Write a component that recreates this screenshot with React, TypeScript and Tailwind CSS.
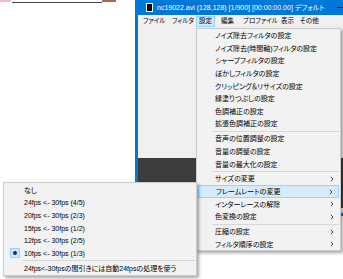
import React from 'react';

type Entry = { label: string; sub?: boolean; active?: boolean } | 'sep';

const mainItems: Entry[] = [
  { label: 'ノイズ除去フィルタの設定' },
  { label: 'ノイズ除去(時間軸)フィルタの設定' },
  { label: 'シャープフィルタの設定' },
  { label: 'ぼかしフィルタの設定' },
  { label: 'クリッピング＆リサイズの設定' },
  { label: '縁塗りつぶしの設定' },
  { label: '色調補正の設定' },
  { label: '拡張色調補正の設定' },
  'sep',
  { label: '音声の位置調整の設定' },
  { label: '音量の調整の設定' },
  { label: '音量の最大化の設定' },
  'sep',
  { label: 'サイズの変更', sub: true },
  { label: 'フレームレートの変更', sub: true, active: true },
  { label: 'インターレースの解除', sub: true },
  { label: '色変換の設定', sub: true },
  'sep',
  { label: '圧縮の設定', sub: true },
  { label: 'フィルタ順序の設定', sub: true },
];

const rateItems = [
  'なし',
  '24fps <- 30fps (4/5)',
  '20fps <- 30fps (2/3)',
  '15fps <- 30fps (1/2)',
  '12fps <- 30fps (2/5)',
  '10fps <- 30fps (1/3)',
];

function Chevron() {
  return (
    <svg width="4" height="6" viewBox="0 0 4 6" className="shrink-0">
      <path d="M0.8 0.8 L3 3 L0.8 5.2" fill="none" stroke="#333" strokeWidth="0.9" />
    </svg>
  );
}

function Separator({ inset }: { inset: string }) {
  return (
    <div className="flex h-[2.3px] items-center">
      <div className={`h-px flex-1 bg-[#d7d7d7] ${inset}`} />
    </div>
  );
}

export default function App() {
  return (
    <div className="relative h-[279px] w-[343px] overflow-hidden bg-white font-['Liberation_Sans','Noto_Sans_CJK_JP',sans-serif] text-[7px] leading-none text-black [font-feature-settings:'palt']">
      {/* scrap of the picture behind the window */}
      <div className="flex h-[3px] w-[135px] items-start">
        <div className="h-[2px] w-[11px] bg-[#f2b8c8]" />
        <div className="ml-px h-[3px] w-[90px] border-b border-[#444]" />
        <div className="h-[2px] w-[14px] bg-[#a86a4a]" />
      </div>

      {/* window */}
      <div className="absolute left-[135px] top-0 flex h-[220px] w-[208px] flex-col bg-[#0078d7] pl-[3px]">
        <div className="flex h-[15px] shrink-0 items-center text-white">
          <div className="ml-[8px] h-[9px] w-[7px] shrink-0 border border-white bg-black" />
          <span className="ml-[4px] whitespace-nowrap">nc19022.avi (128,128) [1/900] [00:00:00.00] デフォルト</span>
          <div className="ml-auto h-px w-[6px] shrink-0 bg-[#111]" />
        </div>
        <div className="flex h-[13px] shrink-0 items-center whitespace-nowrap bg-[#f0f0f0] pl-[5px] text-[6.5px]">
          <span className="w-[29px] shrink-0">ファイル</span>
          <span className="w-[24px] shrink-0">フィルタ</span>
          <span className="flex h-[11px] w-[19px] shrink-0 items-center justify-center border border-[#99d1ff] bg-[#cce8ff]">設定</span>
          <span className="ml-[6px] w-[22px] shrink-0">編集</span>
          <span className="w-[38px] shrink-0">プロファイル</span>
          <span className="w-[19px] shrink-0">表示</span>
          <span className="shrink-0">その他</span>
        </div>
        <div className="h-[130px] shrink-0 bg-[#f0f0f0]" />
        <div className="h-[50px] shrink-0 bg-[#3c3c3c]" />
        <div className="flex flex-1 flex-col justify-center bg-[#f0f0f0]">
          <div className="h-[3px] bg-[#0078d7]" />
        </div>
      </div>

      {/* 設定 menu */}
      <div className="absolute left-[196px] top-[28px] h-[223px] w-[145px] border border-[#cccccc] bg-[#f2f2f2] pt-[0.5px] shadow-[2px_2px_3px_rgba(0,0,0,0.35)]">
        {mainItems.map((it, i) =>
          it === 'sep' ? (
            <Separator key={i} inset="ml-[15px] mr-[1px]" />
          ) : (
            <div
              key={i}
              className={`mx-px flex h-[12.6px] items-center pl-[17px] pr-[5px] ${it.active ? 'border border-[#99d1ff] bg-[#d5ebfc] pl-[16px] pr-[4px]' : ''}`}
            >
              <span className="flex-1 whitespace-nowrap">{it.label}</span>
              {it.sub && <Chevron />}
            </div>
          )
        )}
      </div>

      {/* フレームレートの変更 submenu */}
      <div className="absolute left-[3px] top-[182px] h-[94px] w-[194px] border border-[#cccccc] bg-[#f2f2f2] pt-[1px] shadow-[2px_2px_3px_rgba(0,0,0,0.35)]">
        {rateItems.map((r, i) => (
          <div key={r} className="mx-px flex h-[12.6px] items-center">
            <div className="flex w-[19px] justify-center">
              {i === 5 && (
                <div className="flex h-[10px] w-[10px] items-center justify-center border border-[#99d1ff] bg-[#cce8ff]">
                  <div className="h-[4px] w-[4px] rounded-full bg-[#1c2566]" />
                </div>
              )}
            </div>
            <span className="whitespace-nowrap">{r}</span>
          </div>
        ))}
        <Separator inset="ml-[19px] mr-[1px]" />
        <div className="mx-px flex h-[12.6px] items-center pl-[19px]">
          <span className="whitespace-nowrap">24fps&lt;-30fpsの間引きには自動24fpsの処理を使う</span>
        </div>
      </div>
    </div>
  );
}
